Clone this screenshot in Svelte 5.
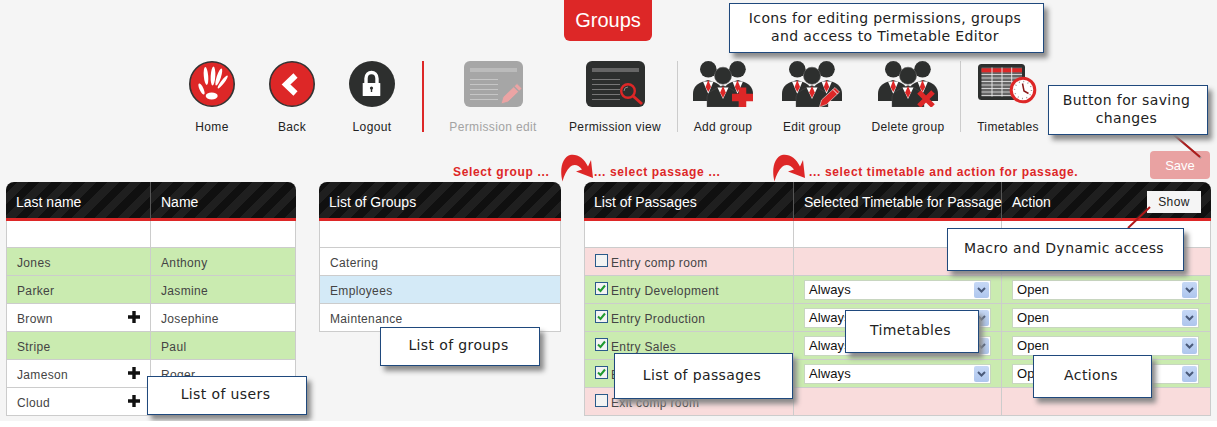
<script>
	const users = [
		{ last: 'Jones', first: 'Anthony', member: true },
		{ last: 'Parker', first: 'Jasmine', member: true },
		{ last: 'Brown', first: 'Josephine', member: false },
		{ last: 'Stripe', first: 'Paul', member: true },
		{ last: 'Jameson', first: 'Roger', member: false },
		{ last: 'Cloud', first: '', member: false }
	];
	const groups = ['Catering', 'Employees', 'Maintenance'];
	const passages = [
		{ name: 'Entry comp room', on: false },
		{ name: 'Entry Development', on: true },
		{ name: 'Entry Production', on: true },
		{ name: 'Entry Sales', on: true },
		{ name: 'Exit Development', on: true },
		{ name: 'Exit comp room', on: false }
	];
</script>

{#snippet people()}
	<circle cx="15.3" cy="8.3" r="8.3" fill="#2d2f2e" />
	<circle cx="44.5" cy="8.3" r="8.3" fill="#2d2f2e" />
	<path d="M0 40V33C0 26 4 23 9 21L15 19L21 21C26 23 30 26 30 33V40Z" fill="#2d2f2e" />
	<path d="M30 40V33C30 26 34 23 39 21L45 19L51 21C56 23 60 26 60 33V40Z" fill="#2d2f2e" />
	<path d="M10 20.5L20.5 20.5L15.3 33Z" fill="#fff" />
	<path d="M39.5 20.5L50 20.5L44.5 33Z" fill="#fff" />
	<path d="M15.3 19L18 26L15.3 31L12.6 26Z" fill="#dd2727" />
	<path d="M44.5 19L47.2 26L44.5 31L41.8 26Z" fill="#dd2727" />
	<circle cx="30" cy="14.7" r="8.5" fill="#2d2f2e" stroke="#5a5a5a" stroke-width="0.6" />
	<path d="M14 46V37C14 32 18 30 24 27L30 24.5L36 27C42 30 46 32 46 37V46Z" fill="#2d2f2e" stroke="#555" stroke-width="0.4" />
	<path d="M24.5 26.5L35.5 26.5L30 38Z" fill="#fff" />
	<path d="M30 25L32.8 31.5L30 37L27.2 31.5Z" fill="#dd2727" />
{/snippet}

{#snippet sheet(body, bar, line)}
	<rect width="59" height="46" rx="6" fill={body} />
	<rect x="6" y="7" width="47" height="4" fill={bar} />
	<path d="M6 18.5H34M6 23.5H34M6 28.5H34M6 33.5H34M6 38.5H34" stroke={line} stroke-width="1" />
{/snippet}

{#snippet curve()}
	<path d="M2.5 27.5C-1 14 3 3 10 1C17 -.5 24 4 28 12.5L31 6L33 24L16 17.5L22 15.5C18 10 13 10 10 13C7 16 4 21 2.5 27.5Z" fill="#dd2727" />
{/snippet}

<div class="page">
	<header class="title">Groups</header>

	<nav class="toolbar">
		<div class="tool home">
			<svg width="46" height="46" viewBox="0 0 46 46">
				<circle cx="23" cy="23" r="22.2" fill="#dd2727" stroke="#333" stroke-width="1.6" />
				<g fill="#fff">
					<ellipse cx="22.7" cy="35" rx="6" ry="3.4" />
					<ellipse cx="12.5" cy="28" rx="2" ry="6" transform="rotate(-25 12.5 28)" />
					<ellipse cx="17" cy="15" rx="2.2" ry="9" transform="rotate(-5 17 15)" />
					<ellipse cx="24" cy="15" rx="2.3" ry="9.5" transform="rotate(3 24 15)" />
					<ellipse cx="29.8" cy="16" rx="2.1" ry="9" transform="rotate(18 29.8 16)" />
					<ellipse cx="33.7" cy="21" rx="1.7" ry="8" transform="rotate(38 33.7 21)" />
				</g>
			</svg>
			<span>Home</span>
		</div>
		<div class="tool home">
			<svg width="46" height="46" viewBox="0 0 46 46">
				<circle cx="23" cy="23" r="22.2" fill="#dd2727" stroke="#333" stroke-width="1.6" />
				<path d="M26.5 14.5L17 23.5L26.5 32.5" fill="none" stroke="#fff" stroke-width="6" />
			</svg>
			<span>Back</span>
		</div>
		<div class="tool home">
			<svg width="46" height="46" viewBox="0 0 46 46">
				<circle cx="23" cy="23" r="23" fill="#2d2f2e" />
				<path d="M17 23V17.5C17 9.5 28 9.5 28 17.5V23" fill="none" stroke="#fff" stroke-width="3.4" />
				<rect x="13.7" y="22" width="17.6" height="13" rx="0.6" fill="#fff" />
				<circle cx="22.5" cy="27" r="1.6" fill="#2d2f2e" />
				<rect x="21.8" y="27" width="1.4" height="4" fill="#2d2f2e" />
			</svg>
			<span>Logout</span>
		</div>

		<div class="rule red"></div>

		<div class="tool wide edit-perm disabled">
			<svg width="59" height="46" viewBox="0 0 59 46">
				{@render sheet('#a6a6a6', '#bbbbbb', '#c6c6c6')}
				<path d="M37 43L39 36L53 22.5L58 27.5L44 41Z" fill="#eba4a4" stroke="#a6a6a6" stroke-width="0.8" />
				<path d="M50 25.5L55 30.5" stroke="#a6a6a6" stroke-width="1.2" />
			</svg>
			<span>Permission edit</span>
		</div>
		<div class="tool wide view-perm">
			<svg width="59" height="46" viewBox="0 0 59 46">
				{@render sheet('#2d2f2e', '#666666', '#777777')}
				<circle cx="42" cy="30" r="6.8" fill="none" stroke="#dd2727" stroke-width="2.4" />
				<path d="M47 35L56 43" stroke="#dd2727" stroke-width="3" />
				<path d="M38 30A4 4 0 0 1 42 26" fill="none" stroke="#888" stroke-width="1" />
			</svg>
			<span>Permission view</span>
		</div>

		<div class="rule gray first"></div>

		<div class="tool add">
			<svg width="60" height="46" viewBox="0 0 60 46">
				{@render people()}
				<path d="M39 36.5H60M49.5 26.5V46" stroke="#dd2727" stroke-width="7.5" />
			</svg>
			<span>Add group</span>
		</div>
		<div class="tool change">
			<svg width="60" height="46" viewBox="0 0 60 46">
				{@render people()}
				<path d="M37.5 46L39.5 39L53 26.5L57.5 31L44.5 43.5Z" fill="#dd2727" stroke="#f5f5f5" stroke-width="0.6" />
				<path d="M51 28.5L55.5 33" stroke="#f5f5f5" stroke-width="1" />
			</svg>
			<span>Edit group</span>
		</div>
		<div class="tool remove">
			<svg width="60" height="46" viewBox="0 0 60 46">
				{@render people()}
				<path d="M41 31L55 45M55 31L41 45" stroke="#dd2727" stroke-width="5" />
			</svg>
			<span>Delete group</span>
		</div>

		<div class="rule gray"></div>

		<div class="tool times">
			<svg width="60" height="46" viewBox="0 0 60 46">
				<rect y="3" width="47" height="36" rx="3.5" fill="#2d2f2e" />
				<rect x="3.5" y="6.5" width="40.5" height="29" fill="#666" />
				<rect x="3.5" y="7.3" width="40.5" height="4" fill="#dd2727" />
				<path d="M3.5 13.5H44M3.5 17H44M3.5 20.5H44M3.5 24H44M3.5 27.5H44M3.5 31H44M3.5 34.5H44" stroke="#ddd" stroke-width="0.9" />
				<path d="M14 6.5V35.5M24 6.5V35.5M33.7 6.5V35.5" stroke="#eee" stroke-width="0.9" />
				<circle cx="45" cy="29" r="11.8" fill="#fff" stroke="#dd2727" stroke-width="3" />
				<circle cx="45" cy="29" r="8.5" fill="none" stroke="#999" stroke-width="1.4" stroke-dasharray="1 3.45" />
				<path d="M44.5 22.5L46 30L50.5 32.5" fill="none" stroke="#8a1a1a" stroke-width="1.5" />
			</svg>
			<span>Timetables</span>
		</div>
	</nav>

	<div class="steps">
		<span class="step first">Select group ...</span>
		<svg class="curve" width="34" height="28" viewBox="0 0 34 28">{@render curve()}</svg>
		<span class="step second">... select passage ...</span>
		<svg class="curve" width="34" height="28" viewBox="0 0 34 28">{@render curve()}</svg>
		<span class="step third">... select timetable and action for passage.</span>
		<button class="save">Save</button>
	</div>

	<div class="tables">
		<table class="users">
			<thead>
				<tr><th>Last name</th><th>Name</th></tr>
			</thead>
			<tbody>
				<tr class="filter"><td></td><td></td></tr>
				{#each users as u}
					<tr class:green={u.member}>
						<td>
							<div class="with-plus">
								{u.last}
								{#if !u.member}
									<svg width="12" height="12" viewBox="0 0 12 12"><path d="M6 0V12M0 6H12" stroke="#111" stroke-width="3.4" /></svg>
								{/if}
							</div>
						</td>
						<td>{u.first}</td>
					</tr>
				{/each}
			</tbody>
		</table>

		<table class="groups">
			<thead>
				<tr><th>List of Groups</th></tr>
			</thead>
			<tbody>
				<tr class="filter"><td></td></tr>
				{#each groups as g}
					<tr class:blue={g === 'Employees'}><td>{g}</td></tr>
				{/each}
			</tbody>
		</table>

		<table class="passages">
			<thead>
				<tr>
					<th>List of Passages</th>
					<th>Selected Timetable for Passage</th>
					<th>
						<div class="with-show">
							Action
							<button class="show">Show</button>
						</div>
					</th>
				</tr>
			</thead>
			<tbody>
				<tr class="filter"><td></td><td></td><td></td></tr>
				{#each passages as p}
					<tr class={p.on ? 'green' : 'pink'}>
						<td>
							<div class="passage">
								<span class="check">
									{#if p.on}
										<svg width="11" height="11" viewBox="0 0 11 11"><path d="M2 5.5L4.5 8L9 2.5" fill="none" stroke="#1f9a2f" stroke-width="2" /></svg>
									{/if}
								</span>
								{p.name}
							</div>
						</td>
						<td class="pick">
							{#if p.on}
								<div class="select">
									<span>Always</span>
									<i><svg width="9" height="6" viewBox="0 0 9 6"><path d="M1 1L4.5 4.5L8 1" fill="none" stroke="#4a5a7a" stroke-width="2" /></svg></i>
								</div>
							{/if}
						</td>
						<td class="pick">
							{#if p.on}
								<div class="select">
									<span>Open</span>
									<i><svg width="9" height="6" viewBox="0 0 9 6"><path d="M1 1L4.5 4.5L8 1" fill="none" stroke="#4a5a7a" stroke-width="2" /></svg></i>
								</div>
							{/if}
						</td>
					</tr>
				{/each}
			</tbody>
		</table>
	</div>

	<!-- screenshot annotations laid over the page -->
	<svg class="leaders" width="1217" height="427">
		<path d="M1173 134L1200 157" stroke="#999" stroke-width="2" transform="translate(1 1)" />
		<path d="M1173 134L1200 157" stroke="#b01818" stroke-width="2" />
		<path d="M1128 228L1150 207" stroke="#b01818" stroke-width="2" />
	</svg>
	<div class="note n-icons">Icons for editing permissions, groups<br />and access to Timetable Editor</div>
	<div class="note n-save">Button for saving<br />changes</div>
	<div class="note n-users">List of users</div>
	<div class="note n-groups">List of groups</div>
	<div class="note n-passages">List of passages</div>
	<div class="note n-times">Timetables</div>
	<div class="note n-actions">Actions</div>
	<div class="note n-macro">Macro and Dynamic access</div>
</div>

<style>
	:global(body) {
		background: #fff;
	}
	.page {
		position: relative;
		height: 421px;
		background: #f5f5f5;
		font-family: "Liberation Sans", Arial, sans-serif;
		overflow: hidden;
	}
	.title {
		width: 88px;
		height: 41px;
		margin-left: 564px;
		background: #dd2727;
		border-radius: 0 0 6px 6px;
		color: #fff;
		font-size: 20px;
		line-height: 41px;
		text-align: center;
	}

	/* toolbar */
	.toolbar {
		display: flex;
		height: 71px;
		margin-top: 20px;
		padding-left: 172px;
	}
	.tool {
		display: flex;
		flex-direction: column;
		align-items: center;
		width: 80px;
		color: #222;
		font-size: 12px;
		letter-spacing: 0.35px;
		white-space: nowrap;
	}
	.tool svg {
		display: block;
		flex-shrink: 0;
		margin-bottom: 13px;
	}
	.tool.wide {
		width: 100px;
	}
	.tool.disabled {
		color: #a3a3a3;
	}
	.rule {
		align-self: stretch;
	}
	.rule.red {
		width: 2px;
		margin: 0 19px 0 10px;
		background: #dd2727;
	}
	.rule.gray {
		width: 1px;
		margin: 0 7px 0 12px;
		background: #ccc;
	}
	.rule.first {
		margin-right: 5px;
	}
	.view-perm {
		margin-left: 22px;
	}
	.change {
		margin-left: 9px;
	}
	.remove {
		margin-left: 16px;
	}

	/* step hints */
	.steps {
		display: flex;
		align-items: flex-end;
		height: 31px;
		margin-top: 19px;
		padding-left: 453px;
		padding-right: 7px;
	}
	.step {
		margin-bottom: 3px;
		color: #dd2727;
		font-size: 12px;
		font-weight: bold;
		letter-spacing: 0.65px;
		white-space: nowrap;
	}
	.step.first {
		width: 107px;
	}
	.step.second {
		width: 178px;
	}
	.step.third {
		margin-left: 3px;
	}
	.curve {
		flex-shrink: 0;
	}
	.save {
		width: 60px;
		height: 28px;
		margin-left: auto;
		margin-bottom: 3px;
		border: none;
		border-radius: 4px;
		background: #e9a2a2;
		color: #fff;
		font-family: inherit;
		font-size: 13px;
	}

	/* tables */
	.tables {
		display: flex;
		align-items: flex-start;
		gap: 23px;
		padding-left: 6px;
	}
	table {
		table-layout: fixed;
		border-collapse: separate;
		border-spacing: 0;
	}
	.users {
		width: 290px;
	}
	.groups {
		width: 242px;
	}
	.passages {
		width: 627px;
	}
	.users th:first-child {
		width: 144px;
	}
	.passages th:nth-child(1) {
		width: 209px;
	}
	.passages th:nth-child(2) {
		width: 208px;
	}
	th {
		box-sizing: border-box;
		height: 39px;
		padding: 4px 0 0 10px;
		background: repeating-linear-gradient(135deg, #101010 0 8px, #1f1f1f 8px 16px);
		border-bottom: 3px solid #dd2727;
		border-left: 1px solid #555;
		color: #fff;
		font-size: 14px;
		font-weight: normal;
		text-align: left;
		white-space: nowrap;
	}
	th:first-child {
		border-left: none;
		border-top-left-radius: 8px;
	}
	th:last-child {
		border-top-right-radius: 8px;
	}
	td {
		box-sizing: border-box;
		height: 28px;
		padding: 2px 0 0 10px;
		border-bottom: 1px solid #ccc;
		border-left: 1px solid #ccc;
		background: #fff;
		color: #444;
		font-size: 12px;
		letter-spacing: 0.35px;
	}
	td:last-child {
		border-right: 1px solid #ccc;
	}
	td.pick {
		padding-top: 0;
	}
	.filter td {
		height: 27px;
	}
	.green td {
		background: #caebb0;
	}
	.pink td {
		background: #f9dcdc;
	}
	.blue td {
		background: #d4eaf7;
	}
	.with-plus {
		display: flex;
		align-items: center;
		justify-content: space-between;
		padding-right: 10px;
	}
	.with-plus svg {
		margin-top: -4px;
	}
	.with-show {
		display: flex;
		align-items: center;
		justify-content: space-between;
		padding-right: 10px;
	}
	.show {
		width: 54px;
		height: 22px;
		border: none;
		background: #f5f5f5;
		color: #222;
		font-family: inherit;
		font-size: 12px;
		letter-spacing: 0.4px;
	}
	.passage {
		display: flex;
		align-items: center;
		gap: 3px;
	}
	.check {
		display: flex;
		align-items: center;
		justify-content: center;
		width: 11px;
		height: 11px;
		margin-top: -4px;
		border: 1px solid #2a5a8a;
		background: #f3f3f3;
	}
	.select {
		display: flex;
		align-items: center;
		justify-content: space-between;
		width: 187px;
		height: 20px;
		box-sizing: border-box;
		padding: 0 1px 0 4px;
		border: 1px solid #c8d6c0;
		background: #fff;
		color: #111;
		font-size: 13px;
		letter-spacing: 0.1px;
	}
	.select i {
		display: flex;
		align-items: center;
		justify-content: center;
		width: 15px;
		height: 16px;
		border-radius: 2px;
		background: linear-gradient(#c6d8f6, #aec6ee);
	}

	/* callouts */
	.leaders {
		position: absolute;
		top: 0;
		left: 0;
		pointer-events: none;
	}
	.note {
		position: absolute;
		display: flex;
		align-items: center;
		justify-content: center;
		box-sizing: border-box;
		padding: 0 3px 3px 0;
		border: 1px solid #1f497d;
		background: #fff;
		box-shadow: 4px 5px 5px #8a8a8a;
		color: #222;
		font-family: "DejaVu Sans", Tahoma, sans-serif;
		font-size: 14px;
		letter-spacing: 0.38px;
		line-height: 18px;
		text-align: center;
	}
	.n-icons {
		left: 729px;
		top: 3px;
		width: 315px;
		height: 50px;
	}
	.n-save {
		left: 1048px;
		top: 85px;
		width: 160px;
		height: 50px;
	}
	.n-users {
		left: 147px;
		top: 376px;
		width: 160px;
		height: 39px;
	}
	.n-groups {
		left: 380px;
		top: 327px;
		width: 160px;
		height: 39px;
	}
	.n-passages {
		left: 614px;
		top: 353px;
		width: 179px;
		height: 46px;
	}
	.n-times {
		left: 845px;
		top: 310px;
		width: 134px;
		height: 43px;
	}
	.n-actions {
		left: 1033px;
		top: 355px;
		width: 119px;
		height: 43px;
	}
	.n-macro {
		left: 947px;
		top: 228px;
		width: 237px;
		height: 43px;
	}
</style>
